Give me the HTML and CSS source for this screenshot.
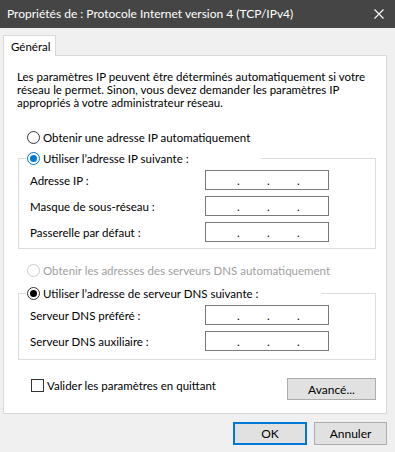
FILE: index.html
```html
<!DOCTYPE html>
<html lang="fr">
<head>
    <meta charset="UTF-8">
    <meta name="viewport" content="width=device-width, initial-scale=1.0">
    <title>Propriétés de : Protocole Internet version 4 (TCP/IPv4)</title>
    <link rel="stylesheet" href="styles.css">
</head>
<body>
    <!-- Title bar -->
    <div class="titlebar">
        <span class="title">Propriétés de : Protocole Internet version 4 (TCP/IPv4)</span>
        <svg class="close" width="10" height="10" viewBox="0 0 10 10">
            <path d="M0.5 0.5L9.5 9.5M9.5 0.5L0.5 9.5" stroke="#ffffff" stroke-width="1.1" fill="none"/>
        </svg>
    </div>

    <div class="dialog">
        <!-- Tabs -->
        <div class="tabs">
            <div class="tab">Général</div>
        </div>

        <!-- General tab panel -->
        <div class="panel">
            <p class="intro">Les paramètres IP peuvent être déterminés automatiquement si votre<br>réseau le permet. Sinon, vous devez demander les paramètres IP<br>appropriés à votre administrateur réseau.</p>

            <div class="option first"><span class="radio"></span>Obtenir une adresse IP automatiquement</div>

            <fieldset class="group">
                <legend class="option ip-legend"><span class="radio checked focused"></span>Utiliser l’adresse IP suivante :</legend>
                <div class="fields">
                    <span class="label">Adresse IP :</span>
                    <div class="ipbox"><span>.</span><span>.</span><span>.</span></div>
                    <span class="label">Masque de sous-réseau :</span>
                    <div class="ipbox"><span>.</span><span>.</span><span>.</span></div>
                    <span class="label">Passerelle par défaut :</span>
                    <div class="ipbox"><span>.</span><span>.</span><span>.</span></div>
                </div>
            </fieldset>

            <div class="option disabled dns-auto"><span class="radio"></span>Obtenir les adresses des serveurs DNS automatiquement</div>

            <fieldset class="group dns-group">
                <legend class="option dns-legend"><span class="radio checked"></span>Utiliser l’adresse de serveur DNS suivante :</legend>
                <div class="fields">
                    <span class="label">Serveur DNS préféré :</span>
                    <div class="ipbox"><span>.</span><span>.</span><span>.</span></div>
                    <span class="label">Serveur DNS auxiliaire :</span>
                    <div class="ipbox"><span>.</span><span>.</span><span>.</span></div>
                </div>
            </fieldset>

            <div class="bottom-row">
                <label class="check"><span class="checkbox"></span>Valider les paramètres en quittant</label>
                <button class="btn advanced">Avancé...</button>
            </div>
        </div>

        <!-- Dialog buttons -->
        <div class="footer">
            <button class="btn default">OK</button>
            <button class="btn cancel">Annuler</button>
        </div>
    </div>
</body>
</html>
```

FILE: styles.css
```css
/* Global styles */
body {
    margin: 0;
    width: 395px;
    height: 452px;
    background-color: #f0f0f0;
    font-family: "Segoe UI", Lato, "Liberation Sans", sans-serif;
    font-size: 11.5px;
    color: #000;
    overflow: hidden;
}

/* Title bar */
.titlebar {
    height: 28px;
    background-color: #454545;
    color: #fff;
    display: flex;
    align-items: center;
    padding: 0 11px 0 7px;
}

.title {
    flex: 1;
    font-size: 12px;
    line-height: 16px;
}

.close {
    display: block;
}

/* Tabs */
.dialog {
    padding: 7px 8px 0 3px;
}

.tabs {
    display: flex;
}

.tab {
    height: 21px;
    line-height: 21px;
    padding-left: 7px;
    box-sizing: border-box;
    width: 53px;
    background-color: #fff;
    border: 1px solid #d9d9d9;
    border-bottom: none;
    margin-bottom: -1px;
    position: relative;
    z-index: 1;
}

/* Panel */
.panel {
    background-color: #fff;
    border: 1px solid #d9d9d9;
    width: 384px;
    box-sizing: border-box;
    padding: 14px 0 13px 0;
}

.intro {
    margin: 0 0 0 13px;
    line-height: 13px;
}

.option {
    display: flex;
    align-items: center;
    height: 16px;
    white-space: nowrap;
}

.option.first {
    margin: 20px 0 0 23px;
}

.option.disabled {
    color: #a0a0a0;
}

.dns-auto {
    margin: 13px 0 0 23px;
}

/* Radio buttons */
.radio {
    width: 13px;
    height: 13px;
    box-sizing: border-box;
    border: 1px solid #333;
    border-radius: 50%;
    background-color: #fff;
    margin-right: 3px;
    display: flex;
    align-items: center;
    justify-content: center;
    flex-shrink: 0;
}

.radio.checked::after {
    content: "";
    width: 7px;
    height: 7px;
    border-radius: 50%;
    background-color: #000;
}

.radio.focused {
    border-color: #0078d7;
}

.radio.focused::after {
    background-color: #0078d7;
}

.disabled .radio {
    border-color: #cccccc;
}

/* Group boxes */
.group {
    margin: 5px 10px 0 14px;
    padding: 4px 0 6px 11px;
    border: 1px solid #dcdcdc;
}

.group legend {
    margin-left: -4px;
    padding: 0 0 0 1px;
    box-sizing: border-box;
}

.ip-legend {
    width: 235px;
}

.dns-legend {
    width: 295px;
}

.dns-group {
    margin-top: 7px;
    padding-bottom: 8px;
}

.fields {
    display: grid;
    grid-template-columns: 175px 124px;
    row-gap: 6px;
    align-items: center;
}

.ipbox {
    height: 20px;
    box-sizing: border-box;
    border: 1px solid #7a7a7a;
    display: flex;
    align-items: flex-end;
    padding: 0 0 2px 31px;
    gap: 27px;
    line-height: 12px;
}

.ipbox span {
    width: 3px;
}

/* Bottom row */
.bottom-row {
    display: flex;
    justify-content: space-between;
    align-items: flex-start;
    margin: 18px 10px 0 27px;
}

.check {
    display: flex;
    align-items: center;
    height: 15px;
}

.checkbox {
    width: 13px;
    height: 13px;
    box-sizing: border-box;
    border: 1px solid #333;
    background-color: #fff;
    margin-right: 3px;
}

/* Buttons */
.btn {
    font-family: inherit;
    font-size: 12px;
    color: #000;
    background-color: #e1e1e1;
    border: 1px solid #adadad;
    height: 22px;
    padding: 0;
    box-sizing: border-box;
}

.advanced {
    width: 89px;
}

.footer {
    display: flex;
    justify-content: flex-end;
    gap: 7px;
    margin-top: 8px;
}

.default {
    width: 74px;
    height: 23px;
    border: 2px solid #0078d7;
}

.cancel {
    width: 73px;
    height: 23px;
}
```
